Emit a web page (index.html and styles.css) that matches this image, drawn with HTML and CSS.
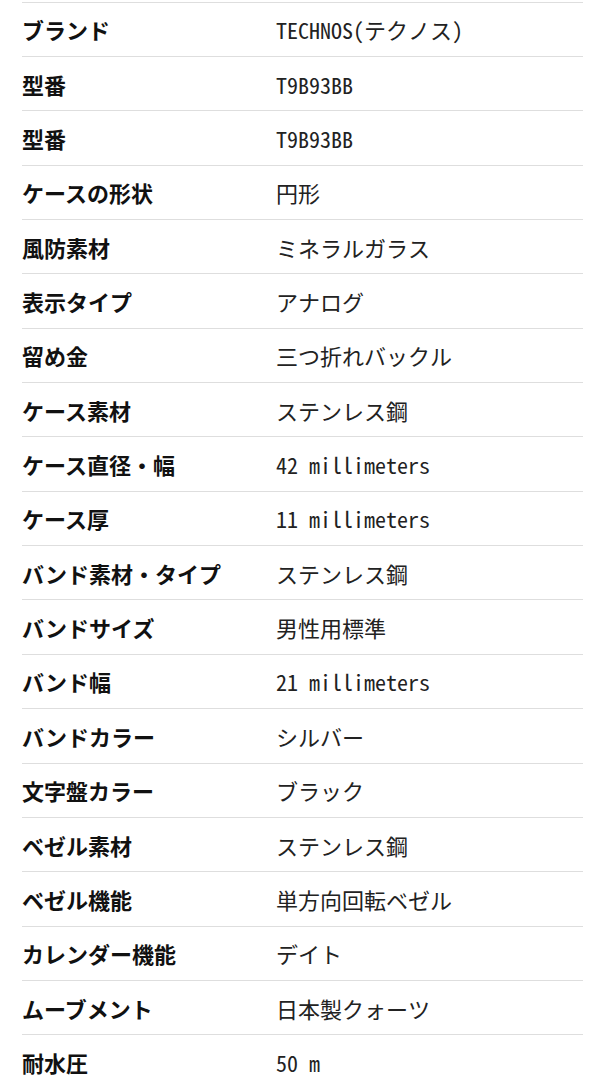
FILE: index.html
```html
<!DOCTYPE html>
<html lang="ja">
<head>
<meta charset="utf-8">
<link rel="stylesheet" href="styles.css">
</head>
<body>
<dl class="spec">
  <div class="row"><dt>ブランド</dt><dd>TECHNOS(テクノス)</dd></div>
  <div class="row"><dt>型番</dt><dd>T9B93BB</dd></div>
  <div class="row"><dt>型番</dt><dd>T9B93BB</dd></div>
  <div class="row"><dt>ケースの形状</dt><dd>円形</dd></div>
  <div class="row"><dt>風防素材</dt><dd>ミネラルガラス</dd></div>
  <div class="row"><dt>表示タイプ</dt><dd>アナログ</dd></div>
  <div class="row"><dt>留め金</dt><dd>三つ折れバックル</dd></div>
  <div class="row"><dt>ケース素材</dt><dd>ステンレス鋼</dd></div>
  <div class="row"><dt>ケース直径・幅</dt><dd>42 millimeters</dd></div>
  <div class="row"><dt>ケース厚</dt><dd>11 millimeters</dd></div>
  <div class="row"><dt>バンド素材・タイプ</dt><dd>ステンレス鋼</dd></div>
  <div class="row"><dt>バンドサイズ</dt><dd>男性用標準</dd></div>
  <div class="row"><dt>バンド幅</dt><dd>21 millimeters</dd></div>
  <div class="row"><dt>バンドカラー</dt><dd>シルバー</dd></div>
  <div class="row"><dt>文字盤カラー</dt><dd>ブラック</dd></div>
  <div class="row"><dt>ベゼル素材</dt><dd>ステンレス鋼</dd></div>
  <div class="row"><dt>ベゼル機能</dt><dd>単方向回転ベゼル</dd></div>
  <div class="row"><dt>カレンダー機能</dt><dd>デイト</dd></div>
  <div class="row"><dt>ムーブメント</dt><dd>日本製クォーツ</dd></div>
  <div class="row"><dt>耐水圧</dt><dd>50 m</dd></div>
</dl>
</body>
</html>
```
FILE: styles.css
```css
html, body {
  margin: 0;
  padding: 0;
  background: #ffffff;
}
body {
  font-family: "Noto Sans CJK JP", sans-serif;
  color: #1a1a1a;
}
.spec {
  margin: 1.5px 22px 0 22px;
  padding: 0;
}
.row {
  box-sizing: border-box;
  height: 54.37px;
  border-top: 1.5px solid #dedede;
  display: grid;
  grid-template-columns: 254px 1fr;
  align-items: center;
}
.row dt {
  margin: 0;
  font-size: 22px;
  font-weight: 700;
  color: #111111;
  line-height: 1;
}
.row dd {
  margin: 0;
  font-family: "Noto Sans Mono CJK JP", "Noto Sans CJK JP", monospace;
  font-size: 22px;
  font-weight: 400;
  color: #222222;
  line-height: 1;
}
```
